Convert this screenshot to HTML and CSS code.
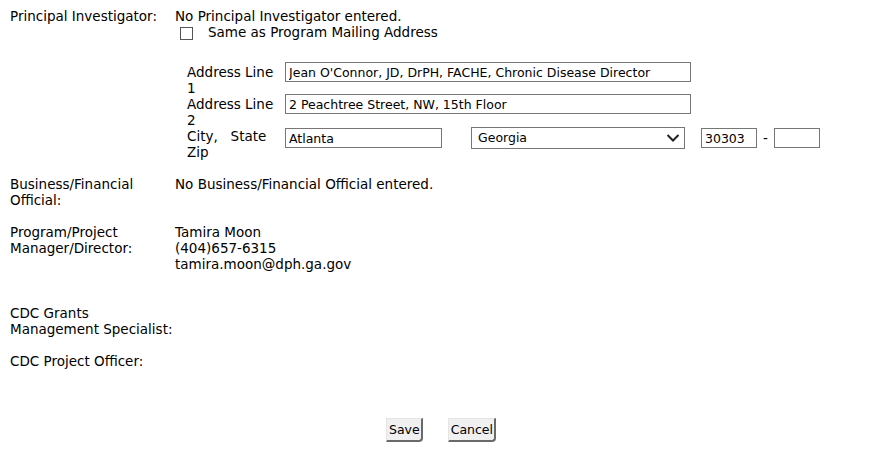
FILE: index.html
```html
<!DOCTYPE html>
<html lang="en">
<head>
    <meta charset="UTF-8">
    <title>Contacts</title>
    <link rel="stylesheet" href="styles.css">
</head>
<body>

<div class="contacts">
    <div class="contact-row">
        <div class="contact-label">Principal Investigator:</div>
        <div class="contact-value">
            <div>No Principal Investigator entered.</div>
            <label class="same-as">
                <input type="checkbox" class="check">
                <span>Same as Program Mailing Address</span>
            </label>
            <div class="address">
                <div class="addr-label">Address Line<br>1</div>
                <div class="addr-field"><input type="text" class="field field-wide" value="Jean O'Connor, JD, DrPH, FACHE, Chronic Disease Director"></div>
                <div class="addr-label">Address Line<br>2</div>
                <div class="addr-field"><input type="text" class="field field-wide" value="2 Peachtree Street, NW, 15th Floor"></div>
                <div class="addr-label">City,&nbsp;&nbsp; State<br>Zip</div>
                <div class="addr-field city-line">
                    <input type="text" class="field field-city" value="Atlanta">
                    <div class="select">
                        <span>Georgia</span>
                        <svg class="chevron" width="14" height="10" viewBox="0 0 14 10"><path d="M1.5 2 L7 7.5 L12.5 2" fill="none" stroke="#222" stroke-width="2"/></svg>
                    </div>
                    <input type="text" class="field field-zip" value="30303">
                    <span class="dash">-</span>
                    <input type="text" class="field field-zip4" value="">
                </div>
            </div>
        </div>
    </div>

    <div class="contact-row">
        <div class="contact-label">Business/Financial<br>Official:</div>
        <div class="contact-value">No Business/Financial Official entered.</div>
    </div>

    <div class="contact-row contact-row-tall">
        <div class="contact-label">Program/Project<br>Manager/Director:</div>
        <div class="contact-value">
            Tamira Moon<br>
            (404)657-6315<br>
            tamira.moon@dph.ga.gov
        </div>
    </div>

    <div class="contact-row">
        <div class="contact-label">CDC Grants<br>Management Specialist:</div>
        <div class="contact-value"></div>
    </div>

    <div class="contact-row">
        <div class="contact-label">CDC Project Officer:</div>
        <div class="contact-value"></div>
    </div>
</div>

<div class="buttons">
    <button type="button" class="btn">Save</button>
    <button type="button" class="btn">Cancel</button>
</div>

</body>
</html>
```

FILE: styles.css
```css
/* Contact details form */
body { margin: 0; padding: 8px 10px; font-family: Verdana, 'DejaVu Sans', sans-serif; font-size: 13.5px; line-height: 16px; color: #000; background: #fff; }
.contacts { display: flex; flex-direction: column; }
.contact-row { display: grid; grid-template-columns: 165px 1fr; margin-bottom: 16px; }
.contact-row-tall { margin-bottom: 33px; }
.contact-label { white-space: nowrap; }
.same-as { display: flex; align-items: center; gap: 15px; margin-left: 5px; height: 16px; }
.check { appearance: none; -webkit-appearance: none; width: 13px; height: 13px; margin: 2px 0 0; border: 1px solid #555; background: #fff; }

/* address block */
.address { display: grid; grid-template-columns: 98px auto; margin: 24px 0 0 12px; }
.addr-label { white-space: nowrap; height: 32px; }
.addr-field { margin-top: -2px; }
.field { font-family: Verdana, 'DejaVu Sans', sans-serif; font-size: 12.5px; height: 20px; box-sizing: border-box; border: 1px solid #767676; padding: 0 3px; margin: 0; color: #000; }
.field-wide { width: 406px; }
.city-line { display: flex; align-items: center; margin-top: 0; height: 20px; }
.field-city { width: 157px; margin-right: 29px; }
.select { display: flex; align-items: center; justify-content: space-between; width: 214px; height: 22px; box-sizing: border-box; border: 1px solid #767676; padding: 0 4px 0 6px; font-size: 12.5px; margin-right: 16px; }
.field-zip { width: 56px; }
.dash { margin: 0 6px; }
.field-zip4 { width: 46px; }

/* buttons */
.buttons { display: flex; justify-content: center; gap: 25px; margin-top: 33px; padding-left: 8px; }
.btn { font-family: Verdana, 'DejaVu Sans', sans-serif; font-size: 12.5px; height: 24px; padding: 0 1px 0 2px; background: #f0f0f0; color: #000; border: 1px solid #e4e4e4; border-right: 2px solid #6a6a6a; border-bottom: 2px solid #6a6a6a; border-radius: 0 0 4px 0; }
```
